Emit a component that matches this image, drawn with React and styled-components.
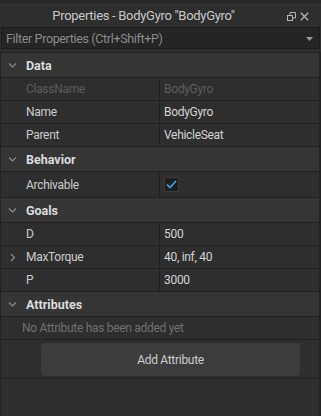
import React from 'react';
import styled, {createGlobalStyle} from "styled-components";

const GlobalStyle = createGlobalStyle`
  html, body {
    margin: 0;
    background: #2e2e2e;
  }
  body {
    font-family: Roboto, "Liberation Sans", sans-serif;
    font-size: 12px;
    color: #cccccc;
  }
`;

const sections = [
    {
        title: "Data",
        rows: [
            {name: "ClassName", value: "BodyGyro", disabled: true},
            {name: "Name", value: "BodyGyro"},
            {name: "Parent", value: "VehicleSeat"},
        ],
    },
    {
        title: "Behavior",
        rows: [{name: "Archivable", checked: true}],
    },
    {
        title: "Goals",
        rows: [
            {name: "D", value: "500"},
            {name: "MaxTorque", value: "40, inf, 40", expandable: true},
            {name: "P", value: "3000"},
        ],
    },
];

function Chevron({open}) {
    return (
        <svg width="9" height="9" viewBox="0 0 9 9">
            {open
                ? <path d="M1 2.5 L4.5 6 L8 2.5" fill="none" stroke="#8c8c8c" strokeWidth="1.2"/>
                : <path d="M3 1 L6.5 4.5 L3 8" fill="none" stroke="#8c8c8c" strokeWidth="1.2"/>}
        </svg>
    );
}

function App() {
    return (
        <Window>
            <GlobalStyle/>
            <TitleBar>
                <Title>Properties - BodyGyro "BodyGyro"</Title>
                <TitleIcons>
                    <svg width="9" height="9" viewBox="0 0 9 9">
                        <rect x="0.5" y="3.5" width="5" height="5" fill="none" stroke="#b4b4b4"/>
                        <path d="M3 3.5 V0.5 H8.5 V6 H5.5" fill="none" stroke="#b4b4b4"/>
                    </svg>
                    <svg width="9" height="9" viewBox="0 0 9 9">
                        <path d="M0.8 0.8 L8.2 8.2 M8.2 0.8 L0.8 8.2" stroke="#b4b4b4" strokeWidth="1.3"/>
                    </svg>
                </TitleIcons>
            </TitleBar>
            <Filter>
                <span>Filter Properties (Ctrl+Shift+P)</span>
                <svg width="7" height="4" viewBox="0 0 7 4">
                    <path d="M0 0 H7 L3.5 4 Z" fill="#9a9a9a"/>
                </svg>
            </Filter>
            <Panel>
                {sections.map((section) => (
                    <React.Fragment key={section.title}>
                        <Header>
                            <Toggle><Chevron open/></Toggle>
                            {section.title}
                        </Header>
                        {section.rows.map((row) => (
                            <Row key={row.name} $tall={row.checked !== undefined}>
                                <Label $disabled={row.disabled}>
                                    <Toggle>{row.expandable && <Chevron/>}</Toggle>
                                    {row.name}
                                </Label>
                                <Value $disabled={row.disabled}>
                                    {row.checked !== undefined ? (
                                        <Checkbox>
                                            <svg width="11" height="9" viewBox="0 0 11 9">
                                                <path d="M1 4.5 L4 7.5 L10 1" fill="none" stroke="#3ca6f2" strokeWidth="1.6"/>
                                            </svg>
                                        </Checkbox>
                                    ) : row.value}
                                </Value>
                            </Row>
                        ))}
                    </React.Fragment>
                ))}
                <Header>
                    <Toggle><Chevron open/></Toggle>
                    Attributes
                </Header>
                <Empty>No Attribute has been added yet</Empty>
                <ButtonArea>
                    <AddButton>Add Attribute</AddButton>
                </ButtonArea>
                <Filler/>
            </Panel>
        </Window>
    );
}

export default App;

const Window = styled.div`
  width: 321px;
  height: 416px;
  display: flex;
  flex-direction: column;
  background: #2e2e2e;
  overflow: hidden;
`;

const TitleBar = styled.div`
  height: 24px;
  border-top: 3px solid #262626;
  display: flex;
  align-items: center;
  background: #2e2e2e;
`;

const Title = styled.div`
  flex: 1;
  text-align: center;
  font-size: 13px;
  letter-spacing: -0.3px;
  color: #c8c8c8;
  padding-top: 1px;
`;

const TitleIcons = styled.div`
  width: 34px;
  display: flex;
  gap: 4px;
  align-items: center;
  padding-top: 3px;
`;

const Filter = styled.div`
  margin: 0 1px;
  height: 20px;
  border: 1px solid #1c1c1c;
  background: #252525;
  display: flex;
  align-items: center;
  justify-content: space-between;
  padding: 0 6px 0 4px;
  color: #8c8c8c;
  font-size: 12.5px;
  letter-spacing: -0.35px;

  svg {
    margin-top: 1px;
  }
`;

const Panel = styled.div`
  margin-top: 3px;
  flex: 1;
  display: flex;
  flex-direction: column;
  border-top: 1px solid #222222;
  border-left: 1px solid #232323;
  border-right: 2px solid #232323;
`;

const Header = styled.div`
  height: 24px;
  border-bottom: 1px solid #222222;
  background: #353535;
  display: flex;
  align-items: center;
  font-weight: bold;
  font-size: 12.5px;
  color: #dcdcdc;
`;

const Toggle = styled.span`
  width: 25px;
  display: flex;
  justify-content: center;
  align-items: center;
  padding-right: 3px;
  box-sizing: border-box;
`;

const Row = styled.div`
  height: ${(p) => (p.$tall ? "25px" : "22px")};
  border-bottom: 1px solid #222222;
  display: grid;
  grid-template-columns: 159px 1fr;
  letter-spacing: -0.3px;
`;

const Label = styled.div`
  display: flex;
  align-items: center;
  border-right: 1px solid #222222;
  color: ${(p) => (p.$disabled ? "#5c5c5c" : "#cccccc")};
`;

const Value = styled.div`
  display: flex;
  align-items: center;
  padding-left: 4px;
  color: ${(p) => (p.$disabled ? "#5c5c5c" : "#d4d4d4")};
`;

const Checkbox = styled.div`
  width: 13px;
  height: 13px;
  background: #1f1f1f;
  border: 1px solid #3a3a3a;
  display: flex;
  align-items: center;
  justify-content: center;
`;

const Empty = styled.div`
  height: 22px;
  border-bottom: 1px solid #222222;
  display: flex;
  align-items: center;
  padding-left: 21px;
  color: #707070;
  letter-spacing: -0.3px;
`;

const ButtonArea = styled.div`
  padding: 3px 19px 2px 40px;
  border-bottom: 1px solid #222222;
`;

const AddButton = styled.div`
  height: 33px;
  border-radius: 4px;
  background: #3c3c3c;
  display: flex;
  align-items: center;
  justify-content: center;
  color: #cccccc;
  letter-spacing: -0.3px;
`;

const Filler = styled.div`
  flex: 1;
`;
